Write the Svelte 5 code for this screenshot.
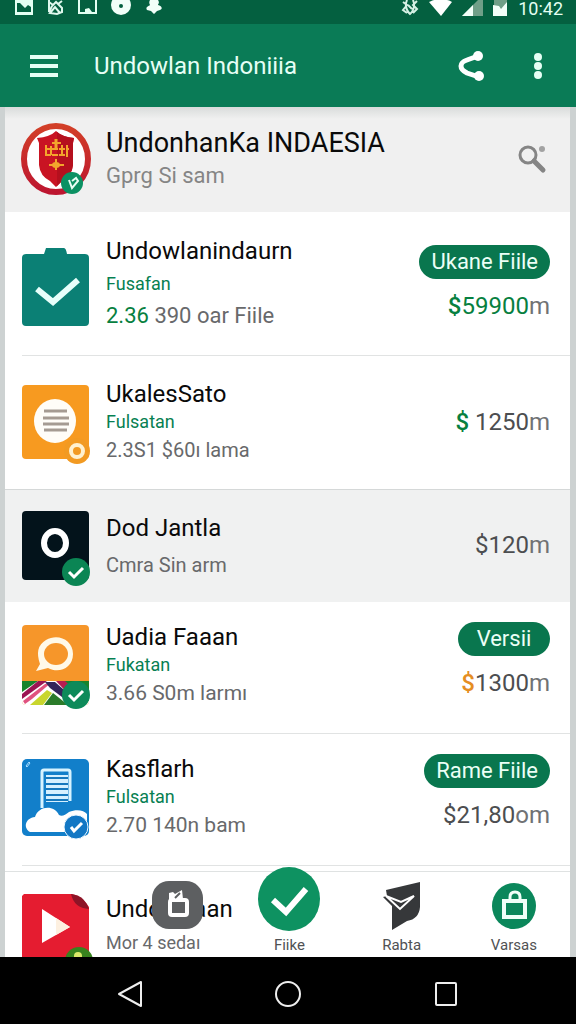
<script>
  const apps = [
    { icon: 'task', title: 'Undowlanindaurn', sub: 'Fusafan', lead: '2.36', meta: '390 oar Fiile', tag: 'Ukane Fiile', sign: '$', amount: '59900', unit: 'm', tone: 'green', amountGreen: true, kind: 'roomy' },
    { icon: 'note', title: 'UkalesSato', sub: 'Fulsatan', meta: '2.3S1 $60ı lama', sign: '$', amount: ' 1250', unit: 'm', tone: 'green', kind: 'even' },
    { icon: 'ring', title: 'Dod Jantla', meta: 'Cmra Sin arm', sign: '$', amount: '120', unit: 'm', kind: 'shaded' },
    { icon: 'chat', title: 'Uadia Faaan', sub: 'Fukatan', meta: '3.66 S0m larmı', tag: 'Versii', sign: '$', amount: '1300', unit: 'm', tone: 'orange', kind: 'tight' },
    { icon: 'cloud', title: 'Kasflarh', sub: 'Fulsatan', meta: '2.70 140n bam', tag: 'Rame Fiile', sign: '$', amount: '21,80', unit: 'om', kind: 'tight' },
    { icon: 'play', title: 'Undownaan', meta: 'Mor 4 sedaı', kind: 'last' }
  ];
</script>

{#snippet check(color)}
  <circle cx="54" cy="61" r="14" fill={color} />
  <path d="M47 61l5 5 9-9" fill="none" stroke="#fff" stroke-width="3" />
{/snippet}

<div class="screen">
  <div class="status">
    <div class="group">
      <svg width="18" height="15" viewBox="0 0 18 15"><path fill="#e4fff2" fill-rule="evenodd" d="M0 0h18v15H0zM2 3v9h14V7l-3-2-3 3-5-5z" /></svg>
      <svg width="17" height="15" viewBox="0 0 17 15"><path d="M2 0v12l3-6 4-4 6 6v4l-5 2-7-1 5-6 5 6M2 2l4 3M15 1l-4 3" fill="none" stroke="#dff8ed" stroke-width="2" /></svg>
      <svg width="19" height="15" viewBox="0 0 19 15"><path d="M1 0v13h17V0" fill="none" stroke="#e4fff2" stroke-width="2" /><path d="M7 9l4-1 3 4H7z" fill="#e4fff2" /></svg>
      <svg width="21" height="15" viewBox="0 0 21 15"><circle cx="10" cy="5" r="10" fill="#f2fff9" /><circle cx="10" cy="6" r="2" fill="#046040" /></svg>
      <svg width="16" height="15" viewBox="0 0 16 15"><path d="M4 0h8c2 3 0 4 0 5 4 1 5 4 2 5l-3 1-3 3-3-3-4-1c-2-3 2-4 3-5-1-2-1-3 0-5z" fill="#f2fff9" /></svg>
    </div>
    <div class="group end">
      <svg width="17" height="16" viewBox="0 0 17 16"><path d="M5 0c-2 5-1 10 3 14 4-3 5-9 3-14M1 2l4 3-4 5 4 3M15 1l-4 4 4 4-4 4M6 5l4 4" fill="none" stroke="#d5f0e4" stroke-width="2" /></svg>
      <svg width="23" height="16" viewBox="0 0 23 16"><path d="M0 2Q4 0 5 0h13q2 0 5 2L12 16z" fill="#fff" /></svg>
      <svg width="21" height="16" viewBox="0 0 21 16"><path d="M0 16L16 0h5v16z" fill="#6f9f88" /><path d="M0 16L11 5v11z" fill="#f2fff9" /></svg>
      <svg width="15" height="16" viewBox="0 0 15 16"><path d="M1 0h13v16H1z" fill="#6f9f88" /><path d="M0 5l6 1 2 3 6-7v14H0z" fill="#f2fff9" /></svg>
      <span>10:42</span>
    </div>
  </div>

  <header>
    <button aria-label="Menu"><svg width="28" height="24" viewBox="0 0 28 24"><path d="M0 3h28M0 12h28M0 21h28" stroke="#e6fff5" stroke-width="4" /></svg></button>
    <h1>Undowlan Indoniiia</h1>
    <button aria-label="Share"><svg width="28" height="32" viewBox="0 0 28 32"><path d="M20 6L9 10Q3 12 3 16t6 7l12 4" fill="none" stroke="#fff" stroke-width="5" /><circle cx="20" cy="6" r="5" fill="#fff" /><circle cx="21" cy="26" r="5" fill="#fff" /></svg></button>
    <button aria-label="More"><svg width="8" height="28" viewBox="0 0 8 28"><g fill="#e6fff5"><circle cx="4" cy="5" r="4" /><circle cx="4" cy="14" r="4" /><circle cx="4" cy="23" r="4" /></g></svg></button>
  </header>

  <main>
    <section class="profile">
      <svg class="avatar" width="70" height="72" viewBox="0 0 70 72">
        <defs><linearGradient id="rim" x2="0" y2="1"><stop offset="0" stop-color="#d23f28" /><stop offset="1" stop-color="#bd1630" /></linearGradient></defs>
        <ellipse cx="35" cy="36" rx="32" ry="33" fill="#fff" stroke="url(#rim)" stroke-width="6" />
        <path d="M35 8q6 6 18 7l-1 5v22q-1 11-11 16l-6 6-6-6q-10-5-11-16V20l-2-5q13-1 19-7z" fill="#c91423" />
        <path d="M36 9q6 5 17 6l-1 5v22q-1 11-11 16l-5 5z" fill="#b5101e" />
        <g stroke="#f3a52c" fill="none"><path d="M25 22v11M30 23v9M41 22v9M46 22v12" stroke-width="2" /><path d="M24 26h24M24 32h23" stroke-width="2" stroke-dasharray="6 1" /><path d="M35 16v10" stroke-width="3" /><path d="M31 20h9M35 36v11M28 42h15" stroke-width="2" /></g>
        <ellipse cx="35" cy="42" rx="4" ry="3" fill="#f3a52c" />
        <circle cx="51" cy="60" r="11" fill="#0b9163" />
        <path d="M48 57l3 8 6-7-2-3-4 3" fill="none" stroke="#e7fff5" stroke-width="2" />
      </svg>
      <div class="text">
        <h2>UndonhanKa INDAESIA</h2>
        <p class="meta">Gprg Si sam</p>
      </div>
      <button aria-label="Search"><svg width="28" height="28" viewBox="0 0 28 28"><g fill="none" stroke="#858585"><circle cx="10" cy="10" r="8" stroke-width="3" /><path d="M16 16l9 9" stroke-width="5" stroke-linecap="round" /></g><circle cx="24" cy="4" r="3" fill="#a2a2a2" /></svg></button>
    </section>

    <ul>
      {#each apps as app}
        <li class={app.kind}>
          <div class="row">
            {#if app.icon === 'task'}
              <svg width="67" height="86" viewBox="0 0 67 86"><path d="M4 14h18l2-6h18q2 0 3 6h18q4 0 4 4v64q0 4-4 4H4q-4 0-4-4V18q0-4 4-4z" fill="#0b8075" /><path d="M15 49l16 13 25-22" fill="none" stroke="#e7fffb" stroke-width="6" /></svg>
            {:else if app.icon === 'note'}
              <svg width="67" height="74" viewBox="0 0 67 74"><rect width="67" height="74" rx="4" fill="#f79a20" /><ellipse cx="33" cy="36" rx="21" ry="22" fill="#fffdf8" /><path d="M22 26h23M21 33h26M21 39h26M22 45h23" stroke="#a59b92" stroke-width="3" /><circle cx="55" cy="66" r="13" fill="#f29a22" /><circle cx="55" cy="66" r="6" fill="none" stroke="#fff1cf" stroke-width="4" /></svg>
            {:else if app.icon === 'ring'}
              <svg width="67" height="69" viewBox="0 0 67 69"><rect width="67" height="69" rx="4" fill="#03131b" /><ellipse cx="33" cy="32" rx="11" ry="12" fill="none" stroke="#fff" stroke-width="6" />{@render check('#0b8554')}</svg>
            {:else if app.icon === 'chat'}
              <svg width="67" height="80" viewBox="0 0 67 80">
                <defs><clipPath id="tile"><rect width="67" height="80" rx="4" /></clipPath></defs>
                <g clip-path="url(#tile)">
                  <rect width="67" height="80" fill="#f6962a" />
                  <path d="M0 56h67v24H0z" fill="#fff" />
                  <path d="M0 56h16L0 67zM36 56h31v20z" fill="#17842b" />
                  <path d="M0 69l16-13h9L0 74z" fill="#9b1453" />
                  <path d="M1 76l22-17 7-2-20 17-7 5z" fill="#e0527f" />
                  <path d="M8 80l17-15 5 3-9 12z" fill="#c8d62d" />
                  <path d="M22 80l9-12 15 12z" fill="#2b7b2a" />
                  <path d="M23 57h10l16 14-5 4-16-12z" fill="#332459" />
                  <path d="M34 56h9l14 12-6 6z" fill="#b71c51" />
                </g>
                <path d="M14 46l4-7q-6-17 6-24c12-7 27 0 27 14s-14 20-25 14z" fill="#fff9e8" /><ellipse cx="34" cy="29" rx="12" ry="11" fill="#f6962a" />
                <circle cx="54" cy="70" r="14" fill="#0d8a5a" /><path d="M47 70l5 5 9-9" fill="none" stroke="#fff" stroke-width="3" />
              </svg>
            {:else if app.icon === 'cloud'}
              <svg width="67" height="77" viewBox="0 0 67 77"><rect width="67" height="77" rx="5" fill="#127fca" /><path d="M4 7l3-4 1 1-3 4z" stroke="#a5dcff" fill="none" /><path d="M20 49V13q0-2 2-2h24q2 0 2 2v29" fill="none" stroke="#d7f3ff" stroke-width="3" /><path d="M24 16h22v27H24z" fill="#d5f0ff" /><path d="M24 19h22M24 25h22M24 30h22M24 36h22M24 41h22" stroke="#1678bd" stroke-width="2" /><path d="M8 73c-7-4-5-14 5-15 3-11 19-13 24-2 3 2 6 0 10-3 7-3 15-2 18 2v15q0 2-3 3z" fill="#fff" /><circle cx="54" cy="68" r="12" fill="#1277c4" stroke="#eaf7ff" /><path d="M49 68l3 4 8-8" fill="none" stroke="#fff" stroke-width="3" /></svg>
            {:else}
              <svg width="67" height="74" viewBox="0 0 67 74"><path d="M2 0h48q5 1 9 4t8 9v61H0V2z" fill="#e51c30" /><path d="M49 0q8 1 12 5t6 10q-15-1-18-15z" fill="#8e1427" /><path d="M20 15l28 18-28 16z" fill="#fff" /><path d="M34 24l14 9-14 8z" fill="#fdf0e0" /><circle cx="57" cy="67" r="14" fill="#38831e" /><circle cx="56" cy="62" r="4" fill="#dce96a" /></svg>
            {/if}

            <div class="text">
              <h3>{app.title}</h3>
              {#if app.sub}<p class="sub">{app.sub}</p>{/if}
              <p class="meta">{#if app.lead}<b>{app.lead}</b>{' '}{/if}{app.meta}</p>
            </div>

            {#if app.sign}
              <div class="side">
                {#if app.tag}<button class="tag">{app.tag}</button>{/if}
                <p class="price" class:greened={app.amountGreen}><b class={app.tone}>{app.sign}</b>{app.amount}<i>{app.unit}</i></p>
              </div>
            {/if}
          </div>
        </li>
      {/each}
    </ul>

    <nav class="tabs" aria-label="Sections">
      <button class="first" aria-label="Bag">
        <svg width="51" height="48" viewBox="0 0 51 48"><rect width="51" height="48" rx="17" fill="#5d5f61" /><rect x="18" y="19" width="17" height="15" rx="2" fill="none" stroke="#fff" stroke-width="4" /><path d="M17 18v-6l4-1 2 2 7-4 1 9z" fill="#fff" /><path d="M23 17l5-5" stroke="#5d5f61" stroke-width="2" /></svg>
      </button>
      <button class="main">
        <svg width="64" height="66" viewBox="0 0 64 66"><ellipse cx="32" cy="33" rx="31" ry="32" fill="#0e9261" /><path d="M16 34l13 12 20-23" fill="none" stroke="#fff" stroke-width="6" /></svg>
        <span>Fiike</span>
      </button>
      <button>
        <svg width="38" height="48" viewBox="0 0 38 48"><path d="M3 8L37 0v25q-1 12-13 14L9 48V24L0 15l4-1z" fill="#36383a" /><path d="M3 14l15 6 13-6-14 13z" fill="#36383a" stroke="#fff" stroke-width="2" /></svg>
        <span>Rabta</span>
      </button>
      <button>
        <svg width="46" height="48" viewBox="0 0 46 48"><ellipse cx="23" cy="24" rx="22" ry="23" fill="#0b875b" /><rect x="13" y="19" width="21" height="16" fill="none" stroke="#effff8" stroke-width="4" /><path d="M19 18v-3q0-5 5-5t5 5v3" fill="none" stroke="#effff8" stroke-width="3" /></svg>
        <span>Varsas</span>
      </button>
    </nav>
  </main>

  <nav class="system" aria-label="System">
    <button aria-label="Back"><svg width="28" height="30" viewBox="0 0 28 30"><path d="M25 3v24L3 15z" fill="none" stroke="#eee" stroke-width="2" stroke-linejoin="round" /></svg></button>
    <button aria-label="Home"><svg width="28" height="30" viewBox="0 0 28 30"><circle cx="14" cy="15" r="12" fill="none" stroke="#eee" stroke-width="2" /></svg></button>
    <button aria-label="Recent"><svg width="28" height="30" viewBox="0 0 28 30"><rect x="4" y="4" width="20" height="22" rx="1" fill="none" stroke="#eee" stroke-width="2" /></svg></button>
  </nav>
</div>

<style>
  :global(body) { background: #cdd2d2; }
  .screen {
    display: flex;
    flex-direction: column;
    height: 100vh;
    font-family: Roboto, "Liberation Sans", sans-serif;
    color: #0a0a0a;
  }
  h1, h2, h3, p, ul { margin: 0; padding: 0; font-weight: 400; }
  ul { list-style: none; }
  button { border: 0; padding: 0; background: none; font: inherit; color: inherit; cursor: pointer; }
  svg { display: block; overflow: visible; flex: none; }

  .status {
    display: flex;
    justify-content: space-between;
    height: 24px;
    padding: 0 13px 0 15px;
    background: #046040;
    color: #e4fff2;
  }
  .group { display: flex; gap: 14px; }
  .end { gap: 10px; }
  .group span { font-size: 18px; line-height: 18px; }

  header {
    display: flex;
    align-items: center;
    height: 83px;
    padding: 0 34px 0 30px;
    background: #0a7b56;
    color: #e6fff5;
    gap: 48px;
  }
  h1 { flex: 1; margin-left: -12px; font-size: 24px; }

  main {
    position: relative;
    flex: 1;
    min-height: 0;
    overflow: hidden;
    margin: 0 6px 0 5px;
    background: #fff;
  }
  .profile {
    display: flex;
    align-items: flex-start;
    padding: 16px 24px 17px 16px;
    background: linear-gradient(#d9dcdb, #f0f0f0 12px);
  }
  .profile .text { margin-left: 15px; padding-top: 4px; }
  .profile button { align-self: center; }
  h2 { font-size: 27px; line-height: 32px; }
  .text { flex: 1; min-width: 0; white-space: nowrap; }
  h3 { font-size: 24px; line-height: 30px; }
  .sub { font-size: 18px; line-height: 26px; color: #078052; }
  .meta { font-size: 20px; line-height: 30px; color: #68696b; }
  .profile .meta { font-size: 22px; line-height: 34px; height: 32px; color: #858585; }
  .meta b { font-weight: 400; color: #078040; }

  li { padding-left: 17px; }
  .row {
    display: flex;
    align-items: center;
    gap: 17px;
    padding: 24px 20px 24px 0;
    border-bottom: 1px solid #e1e3e3;
  }
  .roomy .row { padding-bottom: 25px; }
  .roomy .sub { line-height: 36px; }
  .roomy .meta { font-size: 22px; line-height: 28px; }
  .even { border-bottom: 1px solid #d5d8d8; }
  .even .row, .shaded .row { border-bottom: 0; }
  .even .row { padding: 23px 20px 24px 0; }
  .shaded { background: #f0f1f1; }
  .shaded .row { padding: 18px 20px 20px 0; }
  .shaded h3 { line-height: 40px; }
  .shaded .meta { line-height: 34px; }
  .tight .row { padding: 20px 20px 25px 0; }
  .tight .meta { font-size: 21px; }
  .last .row { align-items: flex-start; padding-top: 28px; border: 0; }
  .last .meta { font-size: 18px; line-height: 38px; }

  .side { display: flex; flex-direction: column; align-items: flex-end; gap: 12px; }
  .tight .side { align-self: flex-start; }
  .tag {
    min-width: 92px;
    height: 34px;
    padding: 0 12px;
    border-radius: 17px;
    background: #09764e;
    color: #ebfff6;
    font-size: 22px;
    line-height: 34px;
  }
  .price { font-size: 24px; line-height: 30px; color: #4c4e50; white-space: pre; }
  .price b { font-weight: 400; }
  .price i { font-style: normal; color: #707274; }
  .price .green, .greened { color: #078040; }
  .price .green, .price .orange { font-weight: 500; }
  .price .orange { color: #e58d22; }

  .tabs {
    position: absolute;
    inset: auto 0 0 0;
    display: grid;
    grid-template-columns: 1fr 1fr 1fr 1fr;
    grid-template-rows: 100%;
    height: 85px;
    padding-left: 116px;
    border-top: 1px solid #dfe2e2;
  }
  .tabs button {
    display: flex;
    flex-direction: column;
    align-items: center;
    justify-content: flex-end;
    font-size: 15px;
    line-height: 24px;
    color: #505254;
  }
  .tabs svg { margin-bottom: 3px; }
  .tabs .main svg { margin-bottom: 1px; }
  .tabs .first svg { margin-bottom: 28px; }

  .system {
    display: flex;
    justify-content: center;
    align-items: center;
    gap: 130px;
    height: 61px;
    padding-top: 6px;
    background: #000;
  }
</style>
